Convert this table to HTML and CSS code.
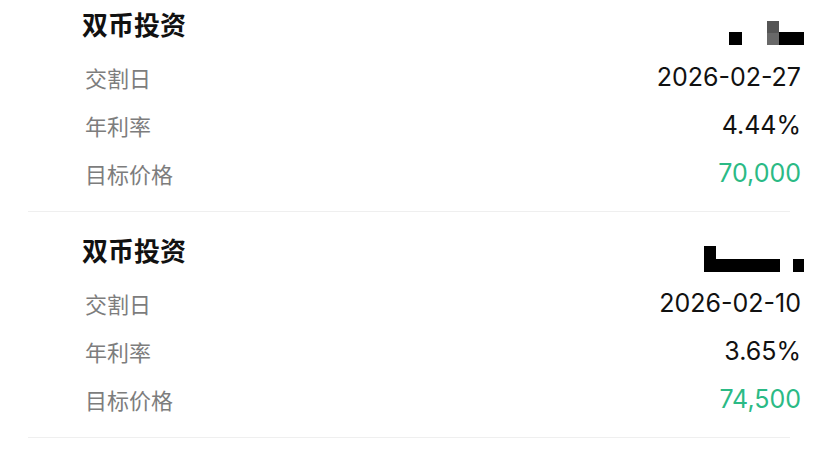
FILE: index.html
```
<!DOCTYPE html>
<html lang="zh-CN">

<head>
    <meta charset="UTF-8">
    <meta name="viewport" content="width=device-width, initial-scale=1.0">
    <title>双币投资</title>
    <link rel="stylesheet" href="styles.css">
</head>

<body>
    <ul class="order-list">
        <li class="order">
            <div class="order-head">
                <span class="order-title">双币投资</span>
                <!-- 打码部分 -->
                <span class="mask mask-a">
                    <i class="dot"></i>
                    <i class="grey"></i>
                    <i class="bar"></i>
                </span>
            </div>
            <div class="row">
                <span class="label">交割日</span>
                <span class="value">2026-02-27</span>
            </div>
            <div class="row">
                <span class="label">年利率</span>
                <span class="value">4.44%</span>
            </div>
            <div class="row">
                <span class="label">目标价格</span>
                <span class="value green">70,000</span>
            </div>
        </li>
        <li class="order">
            <div class="order-head">
                <span class="order-title">双币投资</span>
                <span class="mask mask-b">
                    <i class="hook"></i>
                    <i class="line"></i>
                    <i class="dot"></i>
                </span>
            </div>
            <div class="row">
                <span class="label">交割日</span>
                <span class="value">2026-02-10</span>
            </div>
            <div class="row">
                <span class="label">年利率</span>
                <span class="value">3.65%</span>
            </div>
            <div class="row">
                <span class="label">目标价格</span>
                <span class="value green">74,500</span>
            </div>
        </li>
    </ul>
</body>

</html>
```

FILE: styles.css
```
ul,
li {
    list-style: none;
}

body,
ul,
li {
    margin: 0;
    padding: 0;
}

body {
    background: #fff;
    font-family: "Noto Sans CJK SC", "Noto Sans", sans-serif;
    color: #111;
}

.order-list {
    margin: -14px 40px 0 28px;
}

.order {
    padding: 20px 0 14px;
    border-bottom: 1px solid #efefef;
}

.order .order-head,
.order .row {
    display: flex;
    align-items: center;
    justify-content: space-between;
    margin-left: 54px;
    margin-right: -11px;
}

.order .order-head {
    position: relative;
    height: 36px;
    margin-bottom: 11px;
}

.order .order-title {
    font-size: 26px;
    font-weight: 700;
    line-height: 36px;
}

.order .row {
    height: 48px;
}

.order .label {
    margin-left: 3px;
    font-size: 22px;
    color: #7d7d7d;
}

.order .value {
    font-family: Inter, "Noto Sans", sans-serif;
    font-size: 25px;
    color: #111;
}

.order .value.green {
    color: #2bba85;
}

/* 打码块 */
.mask {
    position: absolute;
    top: 0;
    right: -3px;
    width: 100px;
    height: 42px;
}

.mask i {
    position: absolute;
    display: block;
    background: #000;
}

.mask-a .dot {
    left: 25px;
    top: 26px;
    width: 13px;
    height: 13px;
}

.mask-a .grey {
    left: 63px;
    top: 15px;
    width: 12px;
    height: 24px;
    background: linear-gradient(#555 50%, #686868 50%);
}

.mask-a .bar {
    left: 75px;
    top: 26px;
    width: 25px;
    height: 13px;
}

.mask-b .hook {
    left: 0;
    top: 14px;
    width: 12px;
    height: 23px;
}

.mask-b .line {
    left: 0;
    top: 27px;
    width: 76px;
    height: 13px;
}

.mask-b .dot {
    left: 89px;
    top: 27px;
    width: 11px;
    height: 13px;
}
```
